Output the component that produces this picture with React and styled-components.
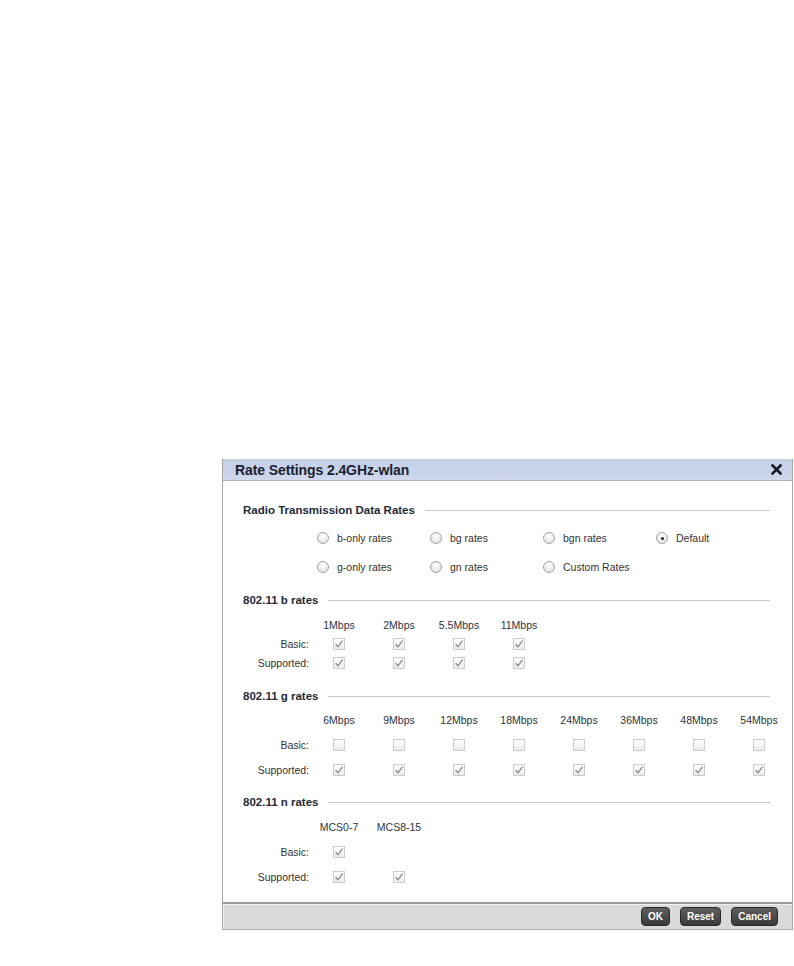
import React from 'react'
import styled, { createGlobalStyle } from 'styled-components'

const Global = createGlobalStyle`
  html, body { margin: 0; padding: 0; background: #fff; }
  body { font-family: "Liberation Sans", Arial, sans-serif; }
`

const radios = [
  { label: 'b-only rates' },
  { label: 'bg rates' },
  { label: 'bgn rates' },
  { label: 'Default', checked: true },
  { label: 'g-only rates' },
  { label: 'gn rates' },
  { label: 'Custom Rates' },
]

const sections = [
  {
    title: '802.11 b rates',
    row: 19,
    top: 8,
    after: 17,
    cols: ['1Mbps', '2Mbps', '5.5Mbps', '11Mbps'],
    basic: [true, true, true, true],
    supported: [true, true, true, true],
  },
  {
    title: '802.11 g rates',
    row: 25,
    top: 4,
    after: 13,
    cols: ['6Mbps', '9Mbps', '12Mbps', '18Mbps', '24Mbps', '36Mbps', '48Mbps', '54Mbps'],
    basic: [false, false, false, false, false, false, false, false],
    supported: [true, true, true, true, true, true, true, true],
  },
  {
    title: '802.11 n rates',
    row: 25,
    top: 5,
    after: 13,
    cols: ['MCS0-7', 'MCS8-15'],
    basic: [true, null],
    supported: [true, true],
  },
]

function Check({ checked }) {
  return (
    <CheckBox>
      {checked && (
        <svg width="10" height="10" viewBox="0 0 10 10">
          <path d="M1.6 5.2 L4 7.8 L8.6 1.6" fill="none" stroke="#8a8a8a" strokeWidth="1.3" />
        </svg>
      )}
    </CheckBox>
  )
}

function App() {
  return (
    <Page>
      <Global />
      <Dialog>
        <TitleBar>
          <Title>Rate Settings 2.4GHz-wlan</Title>
          <Close>
            <svg width="11" height="11" viewBox="0 0 11 11">
              <path d="M1.5 1.5 L9.5 9.5 M9.5 1.5 L1.5 9.5" stroke="#151a22" strokeWidth="2.6" strokeLinecap="square" />
            </svg>
          </Close>
        </TitleBar>
        <Body>
          <Heading top={22}>
            <HeadingText>Radio Transmission Data Rates</HeadingText>
            <Rule />
          </Heading>
          <RadioGrid>
            {radios.map((r) => (
              <RadioItem key={r.label}>
                <RadioDot checked={r.checked} />
                <span>{r.label}</span>
              </RadioItem>
            ))}
          </RadioGrid>
          {sections.map((s) => (
            <Section key={s.title} after={s.after}>
              <Heading top={0}>
                <HeadingText>{s.title}</HeadingText>
                <Rule />
              </Heading>
              <RateGrid top={s.top} row={s.row} count={s.cols.length}>
                <span />
                {s.cols.map((c) => (
                  <ColHead key={c}>{c}</ColHead>
                ))}
                <RowLabel>Basic:</RowLabel>
                {s.basic.map((b, i) => (
                  <Cell key={'b' + i}>{b !== null && <Check checked={b} />}</Cell>
                ))}
                <RowLabel>Supported:</RowLabel>
                {s.supported.map((b, i) => (
                  <Cell key={'s' + i}>
                    <Check checked={b} />
                  </Cell>
                ))}
              </RateGrid>
            </Section>
          ))}
        </Body>
        <Footer>
          <Button>OK</Button>
          <Button>Reset</Button>
          <Button>Cancel</Button>
        </Footer>
      </Dialog>
    </Page>
  )
}

export default App

const Page = styled.div`
  padding: 459px 0 0 222px;
  min-height: 966px;
  box-sizing: border-box;
`

const Dialog = styled.div`
  width: 571px;
  border: 1px solid #a9a9a9;
  border-top: none;
  background: #fff;
  box-sizing: border-box;
`

const TitleBar = styled.div`
  height: 22px;
  display: flex;
  align-items: center;
  justify-content: space-between;
  padding: 0 10px 0 12px;
  background: linear-gradient(#c3cee5, #cfd8ec);
  border-bottom: 1px solid #aab3c4;
  box-sizing: border-box;
`

const Title = styled.div`
  font-size: 14px;
  font-weight: bold;
  color: #1b2230;
  letter-spacing: -0.1px;
`

const Close = styled.div`
  display: flex;
  align-items: center;
`

const Body = styled.div`
  padding: 0 22px 0 20px;
`

const Heading = styled.div`
  display: flex;
  align-items: center;
  gap: 10px;
  height: 14px;
  margin-top: ${(p) => p.top}px;
`

const HeadingText = styled.div`
  font-size: 11.5px;
  font-weight: bold;
  color: #1f2a38;
  white-space: nowrap;
`

const Rule = styled.div`
  flex: 1;
  height: 1px;
  background: #c9c9c9;
`

const RadioGrid = styled.div`
  display: grid;
  grid-template-columns: repeat(4, 113px);
  grid-auto-rows: 20px;
  row-gap: 9px;
  margin: 11px 0 16px 74px;
`

const RadioItem = styled.div`
  display: flex;
  align-items: center;
  gap: 8px;
  font-size: 10.5px;
  color: #333;
`

const RadioDot = styled.div`
  width: 12px;
  height: 12px;
  border-radius: 50%;
  border: 1px solid #a4a4a4;
  background: radial-gradient(circle at 50% 35%, #ffffff, #dcdcdc);
  box-sizing: border-box;
  position: relative;
  flex-shrink: 0;
  &::after {
    content: '';
    display: ${(p) => (p.checked ? 'block' : 'none')};
    position: absolute;
    left: 3.5px;
    top: 3.5px;
    width: 3px;
    height: 3px;
    border-radius: 50%;
    background: #222;
  }
`

const Section = styled.div`
  margin-bottom: ${(p) => p.after}px;
`

const RateGrid = styled.div`
  display: grid;
  grid-template-columns: 66px repeat(${(p) => p.count}, 60px);
  grid-auto-rows: ${(p) => p.row}px;
  align-items: center;
  margin-top: ${(p) => p.top}px;
  font-size: 10.5px;
  color: #333;
`

const ColHead = styled.div`
  text-align: center;
  color: #2c3440;
  white-space: nowrap;
`

const RowLabel = styled.div`
  text-align: right;
  color: #333;
`

const Cell = styled.div`
  display: flex;
  justify-content: center;
`

const CheckBox = styled.div`
  width: 12px;
  height: 12px;
  border: 1px solid #cdcdcd;
  background: linear-gradient(#fdfdfd, #ececec);
  box-sizing: border-box;
  display: flex;
  align-items: center;
  justify-content: center;
`

const Footer = styled.div`
  height: 27px;
  display: flex;
  align-items: center;
  justify-content: flex-end;
  gap: 10px;
  padding: 0 14px;
  background: #dadada;
  border-top: 2px solid #9a9a9a;
  box-shadow: inset 1px 1px 0 #f2f2f2;
  box-sizing: border-box;
`

const Button = styled.button`
  height: 19px;
  padding: 0 6px;
  border: 1px solid #2a2a2a;
  border-radius: 4px;
  background: linear-gradient(#5e5e5e, #3a3a3a);
  color: #fff;
  font-family: "Liberation Sans", Arial, sans-serif;
  font-size: 10px;
  font-weight: bold;
  cursor: pointer;
`
